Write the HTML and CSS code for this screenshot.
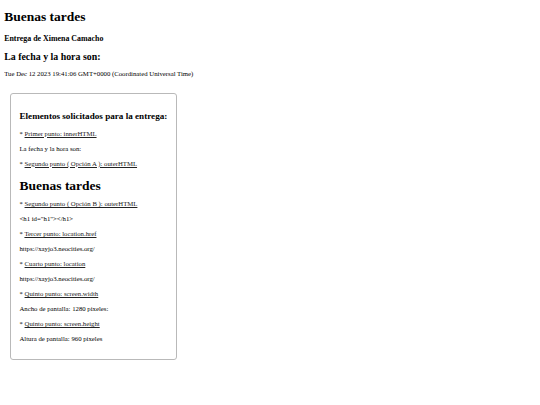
FILE: index.html
```html
<!DOCTYPE html>
<html lang="es">
<head>
<meta charset="utf-8">
<title>Entrega</title>
<link rel="stylesheet" href="styles.css">
</head>
<body>
<h1 class="title">Buenas tardes</h1>
<h3 class="author">Entrega de Ximena Camacho</h3>
<h2 class="subtitle">La fecha y la hora son:</h2>
<p class="date">Tue Dec 12 2023 19:41:06 GMT+0000 (Coordinated Universal Time)</p>
<div class="box">
  <h2 class="box-title">Elementos solicitados para la entrega:</h2>
  <p>* <a href="#">Primer punto: innerHTML</a></p>
  <p>La fecha y la hora son:</p>
  <p>* <a href="#">Segundo punto ( Opción A ): outerHTML</a></p>
  <h1 class="inner-title">Buenas tardes</h1>
  <p>* <a href="#">Segundo punto ( Opción B ): outerHTML</a></p>
  <p>&lt;h1 id="h1"&gt;&lt;/h1&gt;</p>
  <p>* <a href="#">Tercer punto: location.href</a></p>
  <p>https://xayjo3.neocities.org/</p>
  <p>* <a href="#">Cuarto punto: location</a></p>
  <p>https://xayjo3.neocities.org/</p>
  <p>* <a href="#">Quinto punto: screen.width</a></p>
  <p>Ancho de pantalla: 1280 pixeles:</p>
  <p>* <a href="#">Quinto punto: screen.height</a></p>
  <p>Altura de pantalla: 960 pixeles</p>
</div>
</body>
</html>
```

FILE: styles.css
```css
html {
  background: #fff;
}
body {
  margin: 3.4px 3.4px 3.4px 4.2px;
  font-family: "Liberation Serif", "Times New Roman", serif;
  font-size: 6.75px;
  color: #000;
}
p {
  margin: 6.75px 0;
  line-height: 8.25px;
}
.title {
  font-size: 13.5px;
  line-height: 15.5px;
  margin: 5.3px 0 9.6px;
}
.author {
  font-size: 7.9px;
  line-height: 9.1px;
  margin: 9.6px 0 8.4px;
}
.subtitle {
  font-size: 9.9px;
  line-height: 11.4px;
  margin: 8.4px 0 6.9px;
}
.date {
  margin: 6.9px 0 15.6px;
}
.box {
  width: 148px;
  margin: 15.6px 0 0 5.8px;
  padding: 9px 8.5px 8.6px;
  border: 1px solid #b9b9b9;
  border-radius: 3px;
}
.box-title {
  font-size: 9.15px;
  line-height: 10.6px;
  margin: 7.3px 0 8.4px;
  white-space: nowrap;
}
.inner-title {
  font-size: 13.5px;
  line-height: 15.5px;
  margin: 9.85px 0 7.1px;
}
.box a {
  color: #222;
  text-decoration: underline;
}
```
